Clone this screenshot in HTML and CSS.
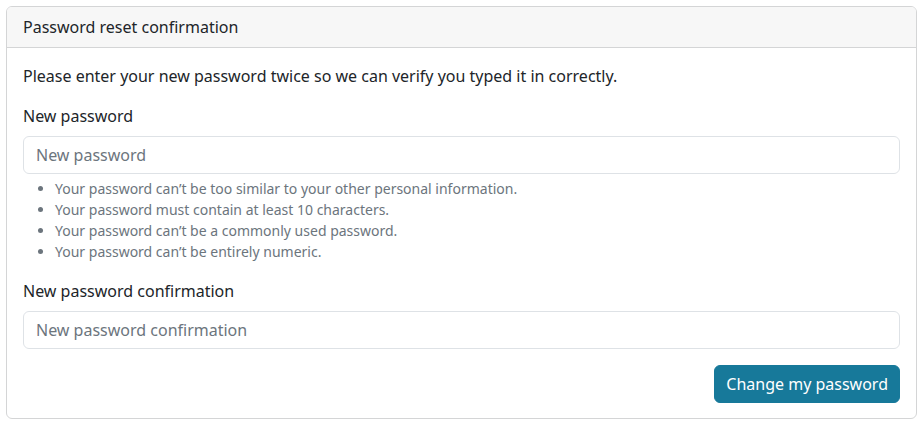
FILE: index.html
```html
<!DOCTYPE html>
<html lang="en">
<head>
<meta charset="utf-8">
<title>Password reset confirmation</title>
<link rel="stylesheet" href="styles.css">
</head>
<body>
<div class="card">
  <div class="card-header">Password reset confirmation</div>
  <div class="card-body">
    <p class="intro">Please enter your new password twice so we can verify you typed it in correctly.</p>
    <form class="form">
      <div class="field">
        <label class="label" for="p1">New password</label>
        <input class="input" id="p1" type="password" placeholder="New password">
        <ul class="help">
          <li>Your password can’t be too similar to your other personal information.</li>
          <li>Your password must contain at least 10 characters.</li>
          <li>Your password can’t be a commonly used password.</li>
          <li>Your password can’t be entirely numeric.</li>
        </ul>
      </div>
      <div class="field">
        <label class="label" for="p2">New password confirmation</label>
        <input class="input" id="p2" type="password" placeholder="New password confirmation">
      </div>
      <div class="actions">
        <button class="btn" type="submit">Change my password</button>
      </div>
    </form>
  </div>
</div>
</body>
</html>
```
FILE: styles.css
```css
* { box-sizing: border-box; }
html, body { background: #fff; }
body {
  margin: 6px;
  font-family: "Noto Sans", "Open Sans", sans-serif;
  font-size: 16px;
  line-height: 1.5;
  color: #212529;
}
.card {
  border: 1px solid #d4d5d6;
  border-radius: 6px;
  overflow: hidden;
}
.card-header {
  background: #f7f7f7;
  border-bottom: 1px solid #d4d5d6;
  padding: 8px 16px;
}
.card-body {
  padding: 16px 16px 15px;
}
.intro { margin: 0 0 16px; }
.form { display: flex; flex-direction: column; }
.field { display: flex; flex-direction: column; margin-bottom: 16px; }
.label { margin-bottom: 8px; }
.input {
  font: inherit;
  color: #212529;
  height: 38px;
  padding: 6px 12px;
  border: 1px solid #dee2e6;
  border-radius: 6px;
  background: #fff;
}
.input::placeholder { color: #6c757d; opacity: 1; }
.help {
  margin: 4px 0 1px;
  padding-left: 32px;
  font-size: 14px;
  color: #6c757d;
}
.actions { display: flex; justify-content: flex-end; }
.btn {
  font: inherit;
  color: #fff;
  background: #17799a;
  border: 1px solid #17799a;
  border-radius: 6px;
  padding: 6px 11px;
  height: 38px;
}
```
